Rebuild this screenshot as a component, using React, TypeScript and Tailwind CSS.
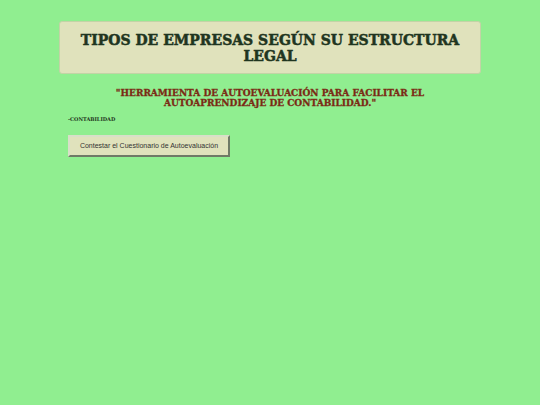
import React from "react";

export default function App() {
  return (
    <div className="min-h-[405px] w-full bg-[#90ee90] pt-[21px] font-['DejaVu_Serif',serif]">
      <div className="mx-auto flex h-[53px] w-[422px] items-center justify-center rounded-[3px] border border-[#c3d3a6] bg-[#e0e2bc] px-4">
        <h1 className="text-center text-[14px] font-bold uppercase leading-[16px] text-[#1f3520] [-webkit-text-stroke:0.5px_#1f3520]">
          Tipos de Empresas Según su Estructura Legal
        </h1>
      </div>

      <p className="mx-auto mt-[14px] w-[330px] text-center text-[9px] font-bold uppercase leading-[10px] text-[#7b2a15] [-webkit-text-stroke:0.3px_#7b2a15]">
        "Herramienta de Autoevaluación para facilitar el autoaprendizaje de Contabilidad."
      </p>

      <div className="pl-[68px]">
        <p className="mt-[7px] text-[5px] font-bold uppercase leading-[8px] text-[#1f3520]">
          -Contabilidad
        </p>
        <button className="mt-[12px] flex h-[22px] w-[162px] items-center justify-center border-2 border-b-[#6f7a66] border-l-[#d9dfc8] border-r-[#6f7a66] border-t-[#d9dfc8] bg-[#e0e2bc] font-['Liberation_Sans',Arial,sans-serif] text-[7px] text-[#333333]">
          Contestar el Cuestionario de Autoevaluación
        </button>
      </div>
    </div>
  );
}
